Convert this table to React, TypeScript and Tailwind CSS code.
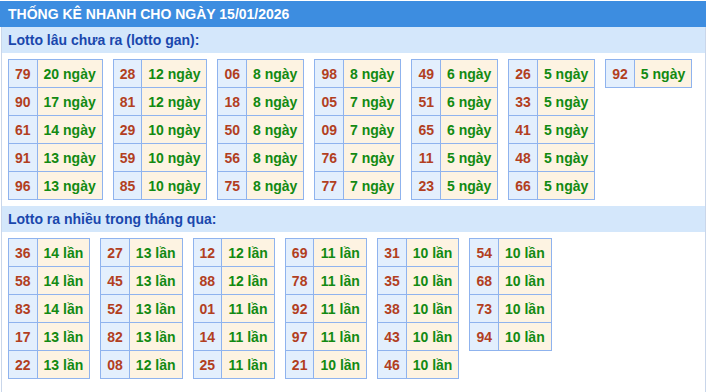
type Row = [string, number];

const ganTables: Row[][] = [
  [['79', 20], ['90', 17], ['61', 14], ['91', 13], ['96', 13]],
  [['28', 12], ['81', 12], ['29', 10], ['59', 10], ['85', 10]],
  [['06', 8], ['18', 8], ['50', 8], ['56', 8], ['75', 8]],
  [['98', 8], ['05', 7], ['09', 7], ['76', 7], ['77', 7]],
  [['49', 6], ['51', 6], ['65', 6], ['11', 5], ['23', 5]],
  [['26', 5], ['33', 5], ['41', 5], ['48', 5], ['66', 5]],
  [['92', 5]],
];

const hotTables: Row[][] = [
  [['36', 14], ['58', 14], ['83', 14], ['17', 13], ['22', 13]],
  [['27', 13], ['45', 13], ['52', 13], ['82', 13], ['08', 12]],
  [['12', 12], ['88', 12], ['01', 11], ['14', 11], ['25', 11]],
  [['69', 11], ['78', 11], ['92', 11], ['97', 11], ['21', 10]],
  [['31', 10], ['35', 10], ['38', 10], ['43', 10], ['46', 10]],
  [['54', 10], ['68', 10], ['73', 10], ['94', 10]],
];

function LottoTable({ rows, unit }: { rows: Row[]; unit: string }) {
  return (
    <table className="self-start border-collapse">
      <tbody>
        {rows.map(([num, count]) => (
          <tr key={num} className="h-[28px]">
            <td className="border border-[#8fb3ee] bg-[#e3effd] px-[6px] py-0 text-center text-[#b23f1f]">
              {num}
            </td>
            <td className="border border-[#8fb3ee] bg-[#fdf3e2] px-[6px] py-0 text-center text-[#128a12]">
              {count} {unit}
            </td>
          </tr>
        ))}
      </tbody>
    </table>
  );
}

function Section({ title, tables, unit }: { title: string; tables: Row[][]; unit: string }) {
  return (
    <>
      <div className="flex h-[26px] items-center bg-[#d4e7fb] px-[6px] text-[#1a47ad]">{title}</div>
      <div className="flex gap-[10px] px-[6px] py-[6px]">
        {tables.map((rows, i) => (
          <LottoTable key={i} rows={rows} unit={unit} />
        ))}
      </div>
    </>
  );
}

export default function App() {
  return (
    <div
      className="w-[706px] h-[392px] bg-white pt-px text-[14px] font-bold leading-none"
      style={{ fontFamily: '"Liberation Sans", Arial, sans-serif' }}
    >
      <div className="flex h-[26px] items-center bg-[#3d8de0] px-[8px] text-white">
        THỐNG KÊ NHANH CHO NGÀY 15/01/2026
      </div>
      <div className="ml-px h-[365px] border-x border-[#c9d6ea]">
        <Section title="Lotto lâu chưa ra (lotto gan):" tables={ganTables} unit="ngày" />
        <Section title="Lotto ra nhiều trong tháng qua:" tables={hotTables} unit="lần" />
      </div>
    </div>
  );
}
